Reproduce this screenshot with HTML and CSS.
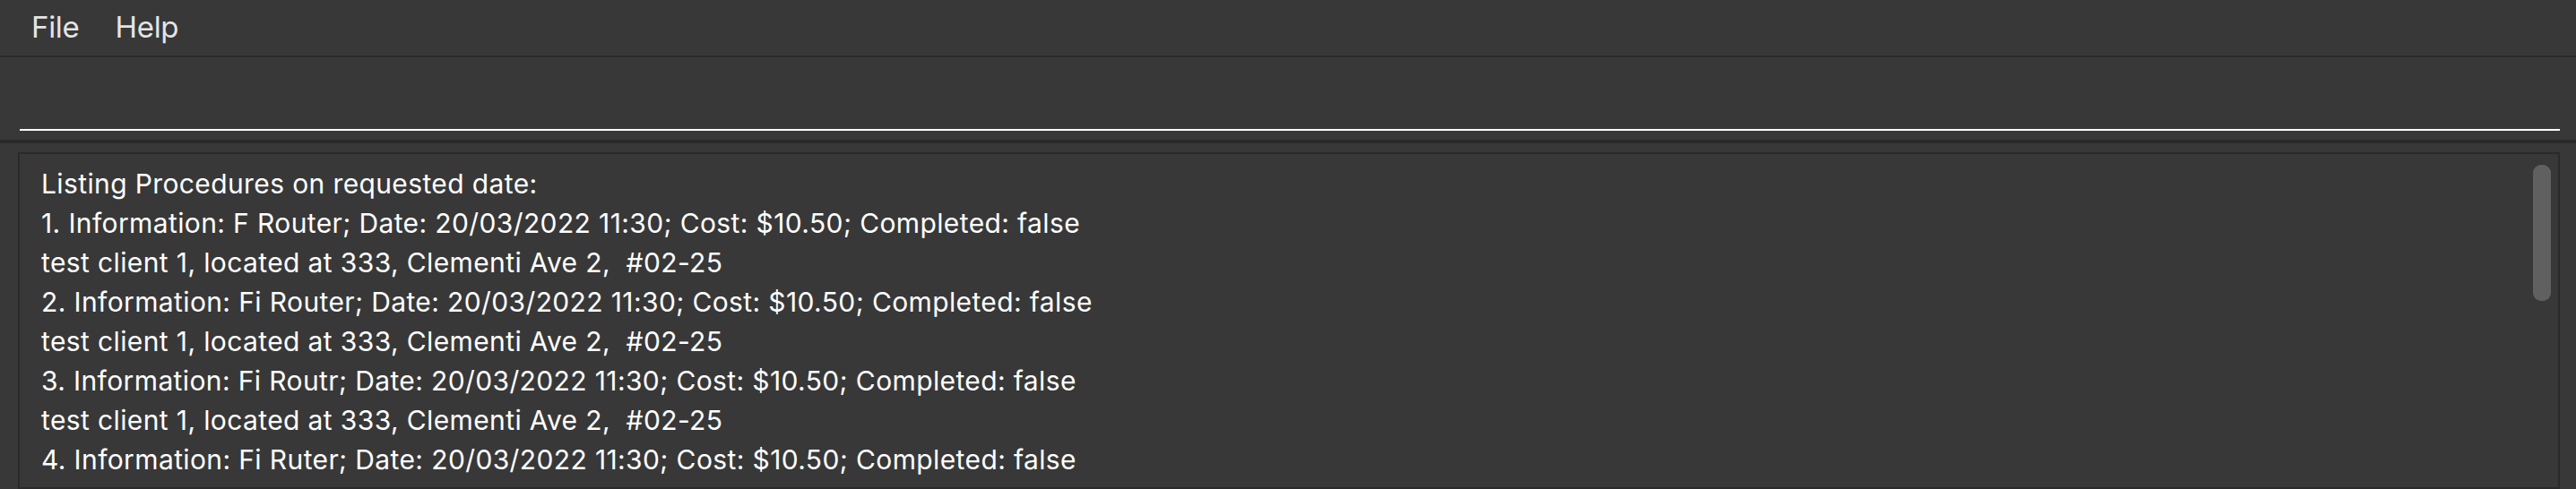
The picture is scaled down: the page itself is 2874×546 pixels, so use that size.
FILE: index.html
```html
<!DOCTYPE html>
<html>
<head>
<meta charset="utf-8">
<link rel="stylesheet" href="styles.css">
</head>
<body>
<div class="app">
  <div class="menubar">
    <span class="menu-item menu-file">File</span>
    <span class="menu-item menu-help">Help</span>
  </div>
  <div class="command">
    <div class="command-field"></div>
  </div>
  <div class="divider"></div>
  <div class="result-area">
    <div class="result-box">
      <div class="result-text">
        <div>Listing Procedures on requested date:</div>
        <div>1. Information: F Router; Date: 20/03/2022 11:30; Cost: $10.50; Completed: false</div>
        <div>test client 1, located at 333, Clementi Ave 2, &nbsp;#02-25</div>
        <div>2. Information: Fi Router; Date: 20/03/2022 11:30; Cost: $10.50; Completed: false</div>
        <div>test client 1, located at 333, Clementi Ave 2, &nbsp;#02-25</div>
        <div>3. Information: Fi Routr; Date: 20/03/2022 11:30; Cost: $10.50; Completed: false</div>
        <div>test client 1, located at 333, Clementi Ave 2, &nbsp;#02-25</div>
        <div>4. Information: Fi Ruter; Date: 20/03/2022 11:30; Cost: $10.50; Completed: false</div>
      </div>
      <div class="scroll-thumb"></div>
    </div>
  </div>
</div>
</body>
</html>
```
FILE: styles.css
```css
html, body {
  margin: 0;
  padding: 0;
  background: #383838;
  height: 100%;
  overflow: hidden;
}
.app {
  display: flex;
  flex-direction: column;
  height: 546px;
  font-family: Inter, "Liberation Sans", sans-serif;
}
.menubar {
  border-bottom: 2px solid #2a2a2a;
  display: flex;
  align-items: center;
  padding-left: 35px;
  padding-bottom: 2px;
  box-sizing: content-box;
  height: 60px;
}
.menu-item {
  font-size: 33px;
  letter-spacing: -0.3px;
  color: #e4e4e4;
  line-height: 1;
}
.menu-file {
  margin-right: 40px;
}
.command {
  height: 92px;
  padding: 0 18px 0 22px;
  display: flex;
  flex-direction: column;
  justify-content: flex-end;
}
.command-field {
  height: 80px;
  border-bottom: 2px solid #ffffff;
  margin-bottom: 10px;
}
.divider {
  height: 4px;
  background: #2a2a2a;
}
.result-area {
  flex: 1;
  padding: 10px 18px 0 20px;
  display: flex;
}
.result-box {
  flex: 1;
  position: relative;
  border: 2px solid #2a2a2a;
  padding: 11px 24px 0 24px;
  overflow: hidden;
}
.result-text {
  font-size: 30px;
  line-height: 44px;
  letter-spacing: 0.38px;
  color: #ffffff;
  white-space: nowrap;
}
.scroll-thumb {
  position: absolute;
  top: 12px;
  right: 8px;
  width: 20px;
  height: 152px;
  border-radius: 9px;
  background: #606060;
}
```
